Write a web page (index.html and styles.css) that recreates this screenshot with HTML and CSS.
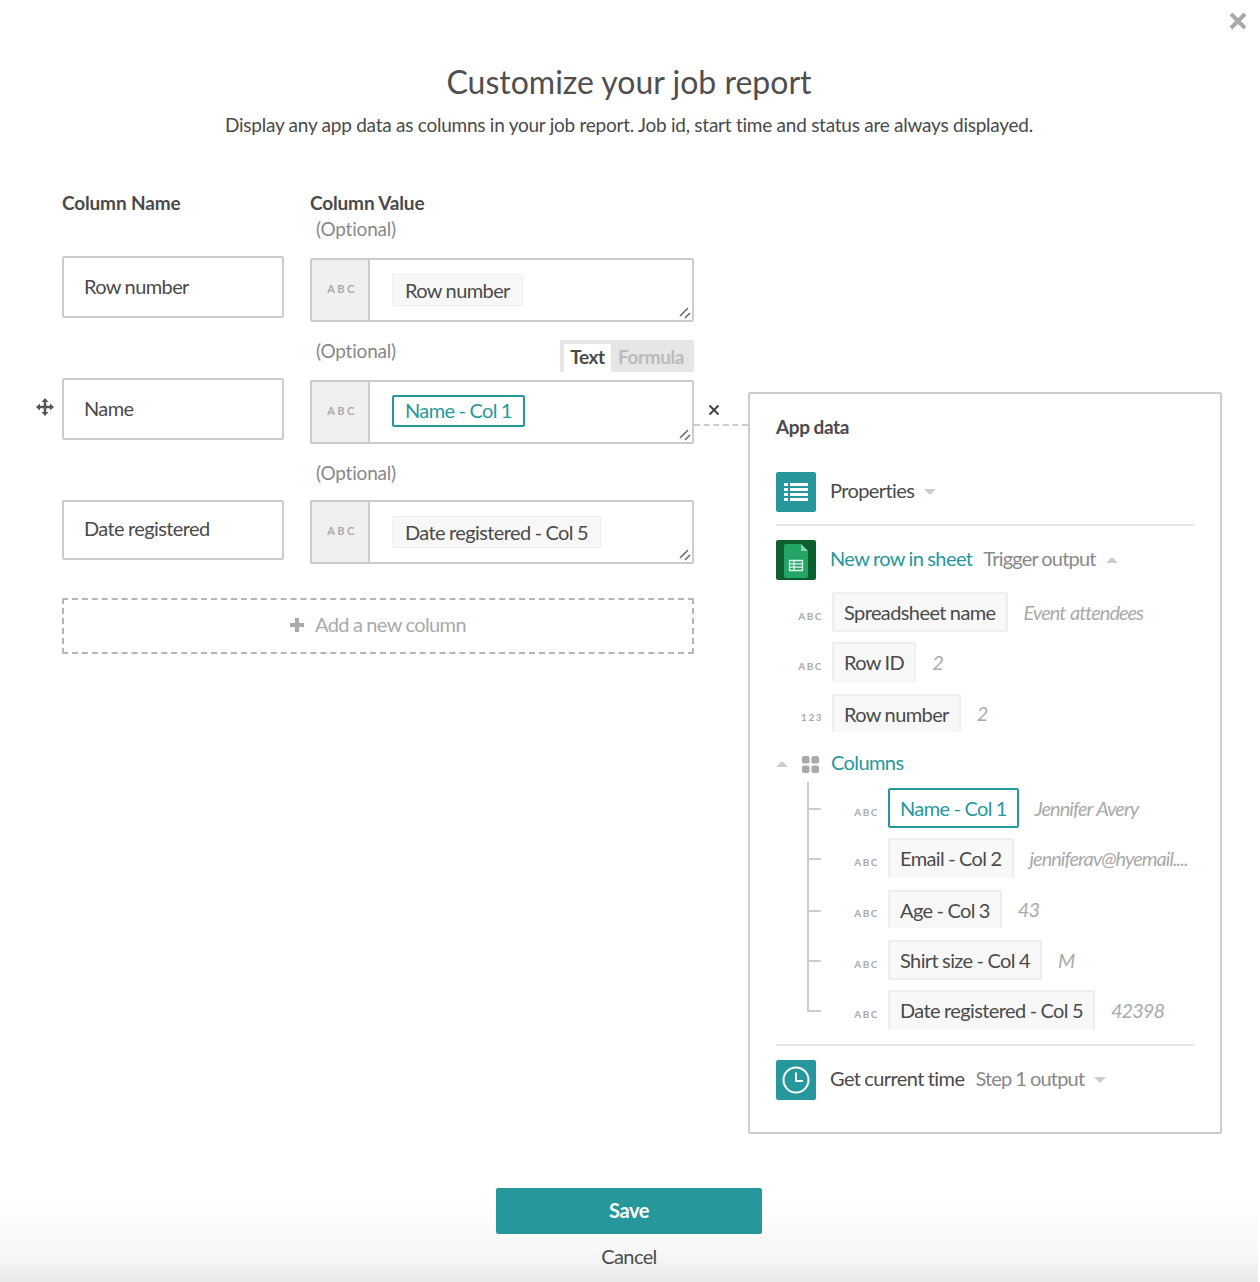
FILE: index.html
```html
<!DOCTYPE html>
<html lang="en">
<head>
  <meta charset="UTF-8">
  <title>Customize your job report</title>
  <link rel="stylesheet" href="styles.css">
</head>
<body>
  <svg class="close" width="20" height="20" viewBox="0 0 20 20"><path d="M3 3l14 14M17 3L3 17" stroke="#a9a9a9" stroke-width="4"/></svg>

  <h1>Customize your job report</h1>
  <p class="intro">Display any app data as columns in your job report. Job id, start time and status are always displayed.</p>

  <div class="main">
    <div class="columns">
      <div class="col-heads">
        <div class="col-head">Column Name</div>
        <div class="col-head">Column Value</div>
      </div>

      <div class="row">
        <div class="name-box">Row number</div>
        <div class="value-col">
          <div class="opt-head first"><span class="optional">(Optional)</span></div>
          <div class="value-box">
            <div class="value-type">ABC</div>
            <div class="value-body"><span class="token">Row number</span></div>
            <svg class="grip" width="12" height="12" viewBox="0 0 12 12"><path d="M1 9l8-8M6 11l5-5" stroke="#666" stroke-width="1.5"/></svg>
          </div>
        </div>
      </div>

      <div class="row">
        <svg class="drag" width="18" height="18" viewBox="0 0 18 18"><path d="M9 2v14M2 9h14" stroke="#555" stroke-width="2.500"/><path d="M9 0l3.500 4h-7zM9 18l3.500-4h-7zM0 9l4-3.500v7zM18 9l-4-3.500v7z" fill="#555"/></svg>
        <div class="name-box">Name</div>
        <div class="value-col">
          <div class="opt-head">
            <span class="optional">(Optional)</span>
            <div class="toggle"><span class="toggle-on">Text</span><span class="toggle-off">Formula</span></div>
          </div>
          <div class="value-box">
            <div class="value-type">ABC</div>
            <div class="value-body"><span class="token active">Name - Col 1</span></div>
            <svg class="grip" width="12" height="12" viewBox="0 0 12 12"><path d="M1 9l8-8M6 11l5-5" stroke="#666" stroke-width="1.5"/></svg>
          </div>
          <svg class="remove" width="12" height="12" viewBox="0 0 12 12"><path d="M1.500 1.500l9 9M10.500 1.500l-9 9" stroke="#444" stroke-width="2"/></svg>
          <div class="connector"></div>
        </div>
      </div>

      <div class="row">
        <div class="name-box short">Date registered</div>
        <div class="value-col">
          <div class="opt-head last"><span class="optional">(Optional)</span></div>
          <div class="value-box">
            <div class="value-type">ABC</div>
            <div class="value-body"><span class="token">Date registered - Col 5</span></div>
            <svg class="grip" width="12" height="12" viewBox="0 0 12 12"><path d="M1 9l8-8M6 11l5-5" stroke="#666" stroke-width="1.5"/></svg>
          </div>
        </div>
      </div>

      <div class="add-column">
        <svg width="14" height="14" viewBox="0 0 14 14"><path d="M7 0v14M0 7h14" stroke="#aaa" stroke-width="4"/></svg>
        <span>Add a new column</span>
      </div>
    </div>

    <div class="panel">
      <div class="panel-title">App data</div>

      <div class="source">
        <div class="app-icon teal">
          <svg width="26" height="20" viewBox="0 0 26 20"><path d="M1 1h4v3H1zM7 1h18v3H7zM1 6h4v3H1zM7 6h18v3H7zM1 11h4v3H1zM7 11h18v3H7zM1 16h4v3H1zM7 16h18v3H7z" fill="#fff"/></svg>
        </div>
        <span class="source-name">Properties</span>
        <span class="caret down"></span>
      </div>

      <div class="divider first-divider"></div>

      <div class="source">
        <div class="app-icon sheets">
          <svg width="24" height="34" viewBox="0 0 24 34"><path d="M2 0h15l7 7v25a2 2 0 0 1-2 2H2a2 2 0 0 1-2-2V2a2 2 0 0 1 2-2z" fill="#23a566"/><path d="M17 0l7 7h-7z" fill="#8ed1b1"/><path d="M5.500 16.500h13v10h-13zM5.500 19.800h13M5.500 23.100h13M10 16.500v10" fill="none" stroke="#e6f5ee" stroke-width="1.300"/></svg>
        </div>
        <span class="source-name link">New row in sheet</span>
        <span class="source-sub">Trigger output</span>
        <span class="caret up"></span>
      </div>

      <div class="fields">
        <div class="field"><span class="type">ABC</span><span class="chip">Spreadsheet name</span><span class="sample">Event attendees</span></div>
        <div class="field tall"><span class="type">ABC</span><span class="chip open">Row ID</span><span class="sample">2</span></div>
        <div class="field clipped"><span class="type">123</span><span class="chip open">Row number</span><span class="sample">2</span></div>
      </div>

      <div class="group-head">
        <span class="caret up small"></span>
        <svg width="17" height="17" viewBox="0 0 18 18"><g fill="#aaa"><rect width="8" height="8" rx="2"/><rect x="10" width="8" height="8" rx="2"/><rect y="10" width="8" height="8" rx="2"/><rect x="10" y="10" width="8" height="8" rx="2"/></g></svg>
        <span class="source-name link">Columns</span>
      </div>

      <div class="fields tree">
        <div class="field"><span class="type">ABC</span><span class="chip active">Name - Col 1</span><span class="sample">Jennifer Avery</span></div>
        <div class="field tall"><span class="type">ABC</span><span class="chip open">Email - Col 2</span><span class="sample">jenniferav@hyemail....</span></div>
        <div class="field clipped"><span class="type">ABC</span><span class="chip open">Age - Col 3</span><span class="sample">43</span></div>
        <div class="field"><span class="type">ABC</span><span class="chip">Shirt size - Col 4</span><span class="sample">M</span></div>
        <div class="field"><span class="type">ABC</span><span class="chip open">Date registered - Col 5</span><span class="sample">42398</span></div>
      </div>

      <div class="divider second-divider"></div>

      <div class="source">
        <div class="app-icon teal">
          <svg width="28" height="28" viewBox="0 0 28 28"><circle cx="14" cy="14" r="12.500" fill="none" stroke="#fff" stroke-width="2"/><path d="M14 6.500V15h7" fill="none" stroke="#fff" stroke-width="2"/></svg>
        </div>
        <span class="source-name">Get current time</span>
        <span class="source-sub">Step 1 output</span>
        <span class="caret down"></span>
      </div>
    </div>
  </div>

  <div class="footer">
    <button class="save">Save</button>
    <div class="cancel">Cancel</div>
  </div>
</body>
</html>
```

FILE: styles.css
```css
* {
  box-sizing: border-box;
}

body {
  margin: 0;
  width: 1258px;
  height: 1282px;
  position: relative;
  overflow: hidden;
  background: #fff;
  font-family: Lato, sans-serif;
  font-size: 20px;
  color: #4a4a4a;
  letter-spacing: -0.6px;
  word-spacing: -0.5px;
}

.close {
  position: absolute;
  top: 11px;
  right: 10px;
}

h1 {
  margin: 0;
  padding-top: 61px;
  height: 104px;
  line-height: 42px;
  font-size: 32px;
  font-weight: 400;
  letter-spacing: 0;
  word-spacing: 0;
  text-align: center;
  color: #4f4f4f;
}

.intro {
  margin: 8px 0 0;
  height: 26px;
  line-height: 26px;
  font-size: 19px;
  letter-spacing: -0.25px;
  word-spacing: 0;
  text-align: center;
}

.main {
  display: flex;
  align-items: flex-start;
  margin-top: 52px;
  padding-left: 62px;
  height: 998px;
}

.columns {
  width: 632px;
}

.col-heads {
  display: flex;
  gap: 26px;
  height: 28px;
}

.col-head {
  width: 222px;
  line-height: 26px;
  font-size: 19px;
  font-weight: 700;
  letter-spacing: -0.15px;
  word-spacing: 0;
}

.row {
  display: grid;
  grid-template-columns: 222px 384px;
  column-gap: 26px;
  position: relative;
}

.drag {
  position: absolute;
  left: -26px;
  bottom: 28px;
}

.name-box {
  align-self: end;
  display: flex;
  align-items: center;
  height: 62px;
  margin-bottom: 4px;
  padding: 0 0 2px 20px;
  border: 2px solid #ccc;
  border-radius: 2px;
}

.name-box.short {
  height: 60px;
  padding-bottom: 4px;
}

.value-col {
  position: relative;
}

.opt-head {
  display: flex;
  justify-content: space-between;
  height: 58px;
  padding-top: 18px;
}

.opt-head.first {
  height: 40px;
  padding-top: 0;
}

.opt-head.last {
  height: 56px;
}

.optional {
  padding-left: 6px;
  line-height: 21px;
  font-size: 19px;
  letter-spacing: -0.2px;
  color: #888;
}

.toggle {
  display: flex;
  width: 134px;
  height: 32px;
  padding: 4px 0 0 4px;
  background: #e6e6e6;
  font-size: 19px;
  font-weight: 700;
  letter-spacing: -0.4px;
}

.toggle-on {
  width: 47px;
  height: 28px;
  line-height: 26px;
  text-align: center;
  background: #fff;
}

.toggle-off {
  padding-left: 7px;
  line-height: 26px;
  color: #bbb;
}

.value-box {
  display: flex;
  height: 64px;
  position: relative;
  border: 2px solid #ccc;
  border-radius: 2px;
}

.value-type {
  width: 58px;
  padding-left: 4px;
  line-height: 58px;
  text-align: center;
  background: #f0f0f0;
  border-right: 2px solid #ccc;
  font-size: 11px;
  font-weight: 700;
  letter-spacing: 2.400px;
  color: #aaa;
}

.value-body {
  padding: 14px 0 0 22px;
}

.token {
  display: block;
  height: 32px;
  padding: 0 12px;
  line-height: 30px;
  background: #f8f8f8;
  border: 1px solid #eee;
  border-radius: 2px;
}

.token.active {
  margin-top: -1px;
  padding: 0 11px;
  line-height: 27px;
  background: #fff;
  border: 2px solid #26989c;
  color: #26989c;
}

.grip {
  position: absolute;
  right: 1px;
  bottom: 1px;
}

.remove {
  position: absolute;
  left: 398px;
  bottom: 28px;
}

.connector {
  position: absolute;
  left: 384px;
  bottom: 18px;
  width: 54px;
  border-top: 2px dashed #ccc;
}

.add-column {
  display: flex;
  align-items: center;
  justify-content: center;
  gap: 11px;
  width: 632px;
  height: 56px;
  margin-top: 34px;
  padding-bottom: 5px;
  border: 2px dashed #b5b5b5;
  border-radius: 2px;
  color: #aaa;
}

.add-column svg {
  margin-top: 2px;
}

.panel {
  width: 474px;
  height: 742px;
  margin: 202px 0 0 54px;
  padding: 20px 26px 0;
  border: 2px solid #ccc;
  border-radius: 2px;
  flex-shrink: 0;
}

.panel-title {
  height: 58px;
  line-height: 26px;
  font-size: 19px;
  font-weight: 700;
  letter-spacing: -0.35px;
}

.source {
  display: flex;
  align-items: center;
  height: 40px;
}

.app-icon {
  display: flex;
  align-items: center;
  justify-content: center;
  width: 40px;
  height: 40px;
  margin-right: 14px;
  border-radius: 2px;
}

.app-icon.teal {
  background: #26989c;
}

.app-icon.sheets {
  background: #0c5f2e;
  padding-top: 2px;
}

.source-name,
.source-sub {
  padding-bottom: 5px;
}

.source-name.link {
  color: #26989c;
}

.source-sub {
  margin-left: 11px;
  letter-spacing: -0.8px;
  color: #888;
}

.caret {
  width: 0;
  height: 0;
  margin-left: 10px;
  border-left: 6px solid transparent;
  border-right: 6px solid transparent;
}

.caret.down {
  border-top: 6px solid #ccc;
}

.caret.up {
  border-bottom: 6px solid #ccc;
}

.caret.up.small {
  margin: 0 14px 0 0;
}

.divider {
  border-top: 2px solid #e4e4e4;
}

.first-divider {
  margin: 12px 0 14px;
}

.second-divider {
  margin: 14px 0 14px;
}

.fields {
  display: flex;
  flex-direction: column;
  gap: 10px;
  margin-top: 12px;
}

.field {
  display: flex;
  align-items: center;
  height: 40px;
  position: relative;
}

.field.tall,
.field.clipped {
  margin-bottom: 2px;
}

.field.clipped {
  height: 38px;
}

.type {
  flex-shrink: 0;
  width: 47px;
  margin: 8px 9px 0 0;
  text-align: right;
  font-size: 10px;
  font-weight: 700;
  letter-spacing: 1.500px;
  word-spacing: 0;
  color: #aaa;
}

.chip {
  display: block;
  height: 100%;
  padding: 0 10px;
  line-height: 36px;
  white-space: nowrap;
  background: #f8f8f8;
  border: 2px solid #eee;
  border-radius: 2px;
}

.chip.open {
  border-bottom: 0;
}

.chip.active {
  background: #fff;
  border-color: #26989c;
  color: #26989c;
}

.sample {
  margin-left: 16px;
  font-style: italic;
  letter-spacing: -1px;
  word-spacing: 1px;
  white-space: nowrap;
  color: #aaa;
}

.group-head {
  display: flex;
  align-items: center;
  height: 24px;
  margin-top: 18px;
}

.group-head svg {
  margin-right: 12px;
}

.tree {
  position: relative;
  margin-top: 12px;
  padding-left: 56px;
}

.tree::before {
  content: "";
  position: absolute;
  left: 31px;
  top: -6px;
  bottom: 18px;
  border-left: 2px solid #ccc;
}

.tree .field::before {
  content: "";
  position: absolute;
  left: -25px;
  top: 20px;
  width: 14px;
  border-top: 2px solid #ccc;
}

.footer {
  position: absolute;
  left: 0;
  right: 0;
  bottom: 0;
  height: 132px;
  padding-top: 38px;
  text-align: center;
  background: linear-gradient(to bottom, #fff 35%, #f7f7f7 80%, #e9e9e9 100%);
}

.save {
  display: block;
  width: 266px;
  height: 46px;
  margin: 0 auto;
  padding-bottom: 3px;
  background: #26989c;
  border: none;
  border-radius: 2px;
  font-family: Lato, sans-serif;
  font-size: 20px;
  font-weight: 700;
  letter-spacing: -0.4px;
  color: #fff;
}

.cancel {
  margin-top: 9px;
  line-height: 26px;
}
```
